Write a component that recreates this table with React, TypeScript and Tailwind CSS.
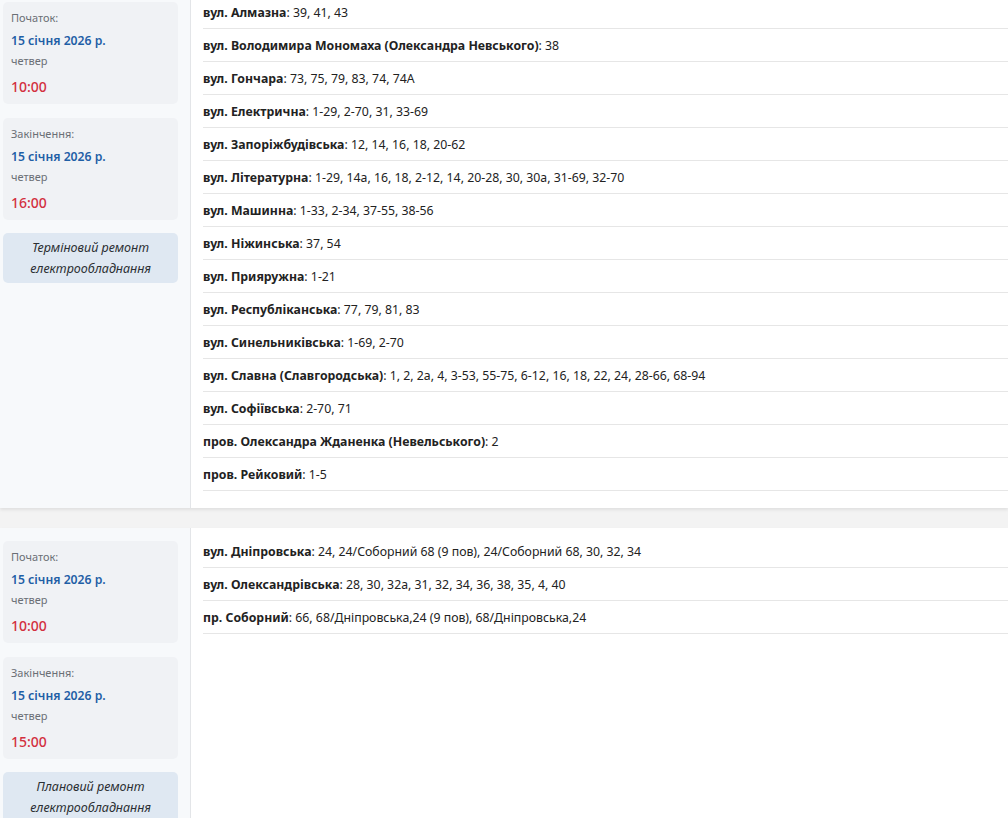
import React from "react";

type Street = { name: string; nums: string };

const s1: Street[] = [
  { name: "вул. Алмазна", nums: "39, 41, 43" },
  { name: "вул. Володимира Мономаха (Олександра Невського)", nums: "38" },
  { name: "вул. Гончара", nums: "73, 75, 79, 83, 74, 74А" },
  { name: "вул. Електрична", nums: "1-29, 2-70, 31, 33-69" },
  { name: "вул. Запоріжбудівська", nums: "12, 14, 16, 18, 20-62" },
  { name: "вул. Літературна", nums: "1-29, 14а, 16, 18, 2-12, 14, 20-28, 30, 30а, 31-69, 32-70" },
  { name: "вул. Машинна", nums: "1-33, 2-34, 37-55, 38-56" },
  { name: "вул. Ніжинська", nums: "37, 54" },
  { name: "вул. Прияружна", nums: "1-21" },
  { name: "вул. Республіканська", nums: "77, 79, 81, 83" },
  { name: "вул. Синельниківська", nums: "1-69, 2-70" },
  { name: "вул. Славна (Славгородська)", nums: "1, 2, 2а, 4, 3-53, 55-75, 6-12, 16, 18, 22, 24, 28-66, 68-94" },
  { name: "вул. Софіївська", nums: "2-70, 71" },
  { name: "пров. Олександра Жданенка (Невельського)", nums: "2" },
  { name: "пров. Рейковий", nums: "1-5" },
];

const s2: Street[] = [
  { name: "вул. Дніпровська", nums: "24, 24/Соборний 68 (9 пов), 24/Соборний 68, 30, 32, 34" },
  { name: "вул. Олександрівська", nums: "28, 30, 32а, 31, 32, 34, 36, 38, 35, 4, 40" },
  { name: "пр. Соборний", nums: "66, 68/Дніпровська,24 (9 пов), 68/Дніпровська,24" },
];

function TimeCard({ label, time }: { label: string; time: string }) {
  return (
    <div className="rounded-[5px] bg-[#f0f2f5] pl-[8px] pt-[8px] h-[102px]">
      <div className="text-[11px] leading-[16px] text-[#6b6f75]">{label}</div>
      <div className="mt-[6px] text-[12.2px] leading-[18px] font-semibold text-[#1f5fa6]">15 січня 2026 р.</div>
      <div className="mt-[3px] text-[11px] leading-[16px] text-[#6b6f75]">четвер</div>
      <div className="mt-[8px] text-[14px] leading-[20px] font-medium text-[#d3303f]">{time}</div>
    </div>
  );
}

function Section({
  streets,
  end,
  reason,
  className,
}: {
  streets: Street[];
  end: string;
  reason: string;
  className?: string;
}) {
  return (
    <div className={"flex bg-white shadow-[0_2px_3px_rgba(0,0,0,0.08)] " + (className ?? "")}>
      <div className="w-[191px] shrink-0 bg-[#f7f9fb] border-r border-[#e3e5e8] pl-[3px] pr-[12px] pt-[13px] flex flex-col gap-[14px]">
        <TimeCard label="Початок:" time="10:00" />
        <TimeCard label="Закінчення:" time={end} />
        <div className="-mt-[1px] rounded-[5px] bg-[#dfe8f2] py-[4px] text-center italic text-[12.5px] leading-[21px] text-[#2b2f33]">
          {reason.split("\n").map((l, i) => (
            <div key={i}>{l}</div>
          ))}
        </div>
      </div>
      <div className="flex-1 pl-[12px] pt-[7px] pb-[17px]">
        {streets.map((s, i) => (
          <div key={i} className="border-b border-[#e6e6e6] pt-[8px] pb-[6px] text-[12.3px] leading-[18px] text-[#222] whitespace-nowrap">
            <span className="font-bold">{s.name}</span>: {s.nums}
          </div>
        ))}
      </div>
    </div>
  );
}

export default function App() {
  return (
    <div
      className="w-[1008px] h-[818px] overflow-hidden bg-[#f3f3f3]"
      style={{ fontFamily: '"Noto Sans", "Open Sans", sans-serif' }}
    >
      <div className="-mt-[11px]">
        <Section streets={s1} end="16:00" reason={"Терміновий ремонт\nелектрообладнання"} />
        <Section
          className="mt-[20px] min-h-[320px]"
          streets={s2}
          end="15:00"
          reason={"Плановий ремонт\nелектрообладнання"}
        />
      </div>
    </div>
  );
}
